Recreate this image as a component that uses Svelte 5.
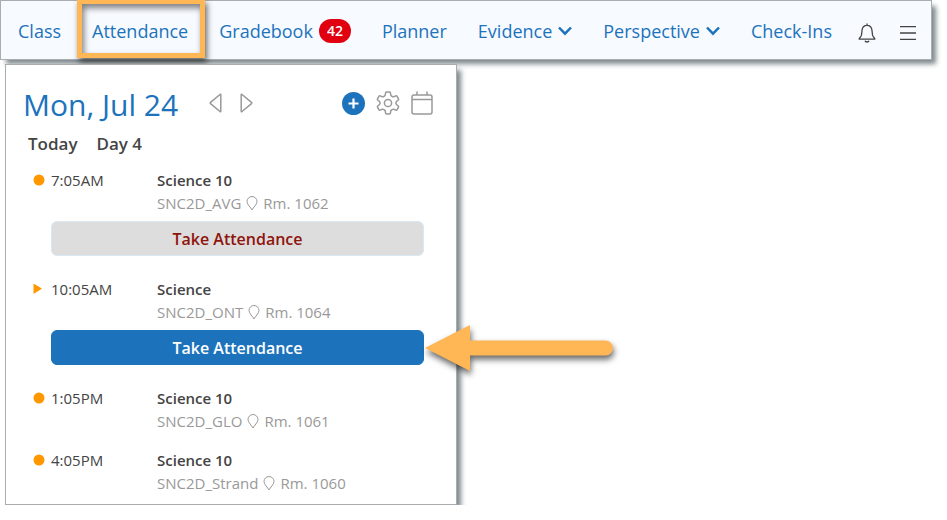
<script lang="ts">
  type NavItem = { label: string; badge?: number; menu?: boolean; current?: boolean };
  type Lesson = {
    time: string;
    title: string;
    code: string;
    room: string;
    now?: boolean;
    action?: "muted" | "primary";
  };

  const navItems: NavItem[] = [
    { label: "Class" },
    { label: "Attendance", current: true },
    { label: "Gradebook", badge: 42 },
    { label: "Planner" },
    { label: "Evidence", menu: true },
    { label: "Perspective", menu: true },
    { label: "Check-Ins" },
  ];

  const lessons: Lesson[] = [
    { time: "7:05AM", title: "Science 10", code: "SNC2D_AVG", room: "Rm. 1062", action: "muted" },
    { time: "10:05AM", title: "Science", code: "SNC2D_ONT", room: "Rm. 1064", now: true, action: "primary" },
    { time: "1:05PM", title: "Science 10", code: "SNC2D_GLO", room: "Rm. 1061" },
    { time: "4:05PM", title: "Science 10", code: "SNC2D_Strand", room: "Rm. 1060" },
  ];
</script>

<nav class="navbar">
  <div class="links">
    {#each navItems as item}
      <a href="#top" class="navLink" class:current={item.current}>
        {item.label}
        {#if item.badge}
          <span class="badge">{item.badge}</span>
        {/if}
        {#if item.menu}
          <svg class="chevron" width="14" height="10" viewBox="0 0 14 10">
            <path d="M1 1.500 L7 7.700 L13 1.500" />
          </svg>
        {/if}
      </a>
    {/each}
  </div>
  <div class="actions">
    <button class="iconButton" aria-label="Notifications">
      <svg width="18" height="20" viewBox="0 0 18 20">
        <path d="M9 .5v1.8M1.2 16.2h15.6c.4-1-2-2.200-2.300-4.200L14 7.500C13.700 4.300 11.700 2.300 9 2.300S4.300 4.300 4 7.500L3.500 12c-.3 2-2.700 3.200-2.300 4.200zM7 17.800c.5 1.600 3.500 1.600 4 0" />
      </svg>
    </button>
    <button class="iconButton" aria-label="Menu">
      <svg width="18" height="14" viewBox="0 0 18 14">
        <path d="M1 .7h16M1 7h16M1 13.300h16" />
      </svg>
    </button>
  </div>
</nav>

<main class="panel">
  <header class="dateBar">
    <h1>Mon, Jul 24</h1>
    <button class="iconButton" aria-label="Previous day">
      <svg width="13" height="20" viewBox="0 0 13 20">
        <path d="M11.800 1.800v16.400q0 .8-.8.3L1.500 10.600q-.7-.6 0-1.200L11 1.500q.8-.5.8.3z" />
      </svg>
    </button>
    <button class="iconButton next" aria-label="Next day">
      <svg width="13" height="20" viewBox="0 0 13 20">
        <path d="M1.200 1.800v16.400q0 .8.8.3l9.500-7.900q.7-.6 0-1.200L2 1.500q-.8-.5-.8.3z" />
      </svg>
    </button>
    <div class="tools">
      <button class="iconButton" aria-label="Add">
        <svg width="23" height="23" viewBox="0 0 23 23">
          <circle class="disc" cx="11.500" cy="11.500" r="11.500" />
          <path class="plus" d="M11.500 6.500v10M6.500 11.500h10" />
        </svg>
      </button>
      <button class="iconButton" aria-label="Settings">
        <svg width="24" height="24" viewBox="0 0 24 24">
          <circle cx="12" cy="12" r="3.600" />
          <path d="M10.500 1h3q.8 0 .9.800l.4 2.300q.1.600.7.900l1.100.6q.5.300 1.100.1l2.200-.8q.8-.3 1.200.4l1.400 2.500q.4.700-.2 1.200l-1.800 1.500q-.5.400-.5 1v1q0 .6.500 1l1.800 1.500q.6.500.2 1.200l-1.400 2.500q-.4.700-1.200.4l-2.200-.8q-.6-.2-1.100.1l-1.100.6q-.6.300-.7.900l-.4 2.300q-.1.800-.9.800h-3q-.8 0-.9-.8l-.4-2.300q-.1-.6-.7-.9l-1.100-.6q-.5-.3-1.100-.1l-2.200.8q-.8.300-1.200-.4l-1.400-2.500q-.4-.7.2-1.200l1.800-1.500q.5-.4.500-1v-1q0-.6-.5-1L1.700 9q-.6-.5-.2-1.200l1.400-2.500q.4-.7 1.200-.4l2.200.8q.6.200 1.100-.1l1.100-.6q.6-.3.7-.9l.4-2.300q.1-.8.900-.8z" />
        </svg>
      </button>
      <button class="iconButton" aria-label="Calendar">
        <svg width="22" height="24" viewBox="0 0 22 24">
          <rect x="1" y="4" width="20" height="19" rx="2" />
          <path d="M1 8.500h20M6 .5V4M16 .5V4" />
        </svg>
      </button>
    </div>
  </header>

  <p class="dayLine"><span>Today</span><span>Day 4</span></p>

  <ul class="lessons">
    {#each lessons as lesson}
      <li>
        <div class="lesson">
          <svg class="marker" width="12" height="12" viewBox="0 0 12 12">
            {#if lesson.now}
              <path d="M.5 1.200Q.5.500 1.200.9L8.500 5.300Q9 5.700 8.500 6.100L1.200 10.600Q.5 11 .5 10.300z" />
            {:else}
              <circle cx="6" cy="6" r="5.500" />
            {/if}
          </svg>
          <span class="time">{lesson.time}</span>
          <div>
            <strong>{lesson.title}</strong>
            <p class="place">
              <span>{lesson.code}</span>
              <svg class="pin" width="12" height="15" viewBox="0 0 12 15">
                <path d="M6 14C4.800 11.500 1 8.500 1 5.500a5 5 0 0 1 10 0C11 8.500 7.200 11.500 6 14z" />
              </svg>
              <span>{lesson.room}</span>
            </p>
          </div>
        </div>
        {#if lesson.action}
          <button class="take {lesson.action}">Take Attendance</button>
        {/if}
      </li>
    {/each}
  </ul>

  <svg class="arrow" width="188" height="46" viewBox="0 0 188 46">
    <path d="M0 23L45 0V15.500H180.500a7.500 7.500 0 0 1 0 15H45V46z" />
  </svg>
</main>

<style>
  :global(body) {
    background: #fff;
    font-family: "Open Sans", "Noto Sans", sans-serif;
    color: #444;
  }

  .navbar {
    display: flex;
    align-items: center;
    justify-content: space-between;
    box-sizing: border-box;
    height: 60px;
    margin-right: 15px;
    padding: 2px 14px 0 17px;
    background: #f7faff;
    border: 1px solid #aaadb0;
    box-shadow: 5px 5px 5px -1px #7f898d;
  }

  .links {
    display: flex;
    gap: 31px;
  }

  .actions {
    display: flex;
    align-items: center;
    gap: 23px;
    padding-top: 4px;
  }

  .navLink {
    position: relative;
    display: flex;
    align-items: center;
    color: #1c73bc;
    font-size: 18px;
    line-height: 24px;
    text-decoration: none;
    white-space: nowrap;
  }

  /* highlight frame round the selected tab */
  .current::after {
    content: "";
    position: absolute;
    inset: -20px -17px -15px -15px;
    border: 5px solid #ffb655;
    box-shadow: 2px 4px 6px rgba(0, 0, 0, 0.6), inset 2px 4px 6px rgba(0, 0, 0, 0.5);
  }

  .badge {
    margin-left: 6px;
    padding: 0 8px;
    border-radius: 12px;
    background: #e1000f;
    color: #fff;
    font-size: 14px;
    font-weight: 600;
  }

  .chevron {
    margin-left: 6px;
    fill: none;
    stroke: #1c73bc;
    stroke-width: 2.500;
  }

  .iconButton {
    display: flex;
    padding: 0;
    border: none;
    background: none;
    cursor: pointer;
  }

  .iconButton svg {
    fill: none;
    stroke: #999;
    stroke-width: 1.500;
    stroke-linejoin: round;
  }

  .actions .iconButton svg {
    stroke: #444;
    stroke-width: 1.300;
  }

  .panel {
    position: relative;
    box-sizing: border-box;
    max-width: 452px;
    margin: 4px 0 0 5px;
    padding: 17px 32px 9px 17px;
    background: #fff;
    border: 1px solid #aaadb0;
    box-shadow: 5px 5px 5px -1px #7f898d;
  }

  .dateBar {
    display: flex;
    align-items: center;
    margin-right: -9px;
  }

  .dateBar .iconButton {
    padding-bottom: 4px;
  }

  h1 {
    margin: 0 31px 0 0;
    color: #1c73bc;
    font-size: 30px;
    font-weight: 400;
    line-height: 46px;
  }

  .next {
    margin-left: 18px;
  }

  .tools {
    display: flex;
    align-items: center;
    gap: 11px;
    margin-left: auto;
  }

  .iconButton .disc {
    fill: #1c73bc;
    stroke: none;
  }

  .iconButton .plus {
    stroke: #fff;
    stroke-width: 2.200;
  }

  .dayLine {
    display: flex;
    gap: 19px;
    margin: 4px 0 13px 5px;
    font-size: 17px;
    font-weight: 600;
    line-height: 24px;
  }

  .lessons {
    display: grid;
    gap: 16px;
    margin: 0;
    padding: 0 0 0 10px;
    list-style: none;
  }

  .lesson {
    display: grid;
    grid-template-columns: 18px 106px 1fr;
    font-size: 15px;
    line-height: 23px;
  }

  .marker {
    margin-top: 5px;
    fill: #ff9800;
  }

  strong {
    display: block;
    font-weight: 600;
  }

  .place {
    display: flex;
    align-items: center;
    gap: 5px;
    margin: 0;
    color: #999;
  }

  .pin {
    fill: none;
    stroke: #999;
  }

  .take {
    display: block;
    box-sizing: border-box;
    width: calc(100% - 18px);
    height: 35px;
    margin: 6px 0 6px 18px;
    padding: 0;
    border: 1px solid #1c73bc;
    border-radius: 6px;
    background: #1c73bc;
    color: #fff;
    font: 600 16px "Open Sans", "Noto Sans", sans-serif;
    cursor: pointer;
  }

  .muted {
    border-color: #d9e8f2;
    background: #ddd;
    color: #8f140c;
  }

  /* callout pointing at the active button */
  .arrow {
    position: absolute;
    top: 260px;
    left: calc(100% - 31px);
    overflow: visible;
    fill: #ffb655;
    filter: drop-shadow(1px 4px 3px rgba(0, 0, 0, 0.6));
  }
</style>
